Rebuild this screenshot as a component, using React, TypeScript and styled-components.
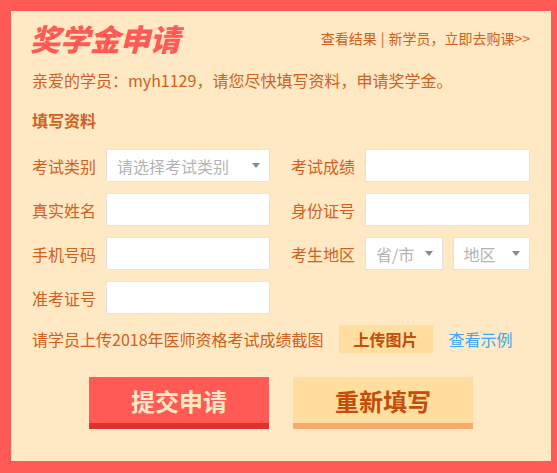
import React from "react";
import styled, { createGlobalStyle } from "styled-components";

const Global = createGlobalStyle`
  html, body { margin: 0; padding: 0; }
  body { font-family: "Noto Sans CJK SC", "Noto Sans", sans-serif; }
  * { box-sizing: border-box; }
`;

const Frame = styled.div`
  width: 557px;
  height: 473px;
  background: #ff5a55;
  padding: 11px 6px 12px 11px;
`;

const Panel = styled.div`
  height: 100%;
  background: #ffe9c4;
  padding: 10px 21px 0 21px;
  color: #d0601c;
`;

const Header = styled.div`
  display: flex;
  align-items: center;
  justify-content: space-between;
  height: 34px;
`;

const Title = styled.h1`
  margin: 0 0 0 -2px;
  font-size: 30px;
  line-height: 34px;
  font-weight: 900;
  font-style: italic;
  color: #ff5a55;
`;

const Links = styled.div`
  font-size: 14px;
  line-height: 20px;
  color: #d0601c;
  display: flex;
  align-items: center;
`;

const Sep = styled.span`
  margin: 0 4px;
`;

const Greeting = styled.p`
  margin: 14px 0 0;
  font-size: 16px;
  line-height: 22px;
`;

const SectionTitle = styled.h2`
  margin: 18px 0 0;
  font-size: 16px;
  line-height: 22px;
  font-weight: 700;
`;

const Form = styled.div`
  margin-top: 18px;
  display: grid;
  grid-template-columns: 238px 239px;
  column-gap: 21px;
  row-gap: 11px;
`;

const Field = styled.div`
  display: flex;
  align-items: center;
  height: 33px;
`;

const Label = styled.span`
  width: 74px;
  flex: none;
  font-size: 16px;
  line-height: 22px;
`;

const Inputs = styled.div`
  flex: 1;
  display: flex;
  gap: 10px;
  height: 100%;
`;

const Box = styled.div`
  flex: 1;
  height: 100%;
  background: #fff;
  border: 1px solid #e4e4e4;
  display: flex;
  align-items: center;
  justify-content: space-between;
  padding: 0 9px 0 10px;
`;

const Placeholder = styled.span`
  font-size: 16px;
  color: #b4b4b4;
  line-height: 22px;
`;

const Caret = styled.span`
  width: 0;
  height: 0;
  border-left: 4px solid transparent;
  border-right: 4px solid transparent;
  border-top: 5px solid #8a8a8a;
`;

const UploadRow = styled.div`
  margin-top: 11px;
  height: 28px;
  display: flex;
  align-items: center;
`;

const UploadText = styled.span`
  font-size: 16px;
  line-height: 22px;
  white-space: nowrap;
`;

const UploadButton = styled.span`
  margin-left: 15px;
  width: 94px;
  height: 28px;
  flex: none;
  background: #ffdea0;
  color: #c44d08;
  font-size: 16px;
  font-weight: 700;
  display: flex;
  align-items: center;
  justify-content: center;
`;

const ExampleLink = styled.span`
  margin-left: 16px;
  color: #3aaaf2;
  font-size: 16px;
  line-height: 22px;
  white-space: nowrap;
`;

const Actions = styled.div`
  margin-top: 24px;
  display: flex;
  justify-content: center;
  gap: 24px;
`;

const ActionButton = styled.div<{ $primary?: boolean }>`
  width: 180px;
  height: 52px;
  background: ${(p) => (p.$primary ? "#ff5a55" : "#ffdea0")};
  border-bottom: 6px solid ${(p) => (p.$primary ? "#e0322d" : "#ffa86c")};
  color: ${(p) => (p.$primary ? "#ffe9c4" : "#c44d08")};
  font-size: 24px;
  font-weight: 700;
  display: flex;
  align-items: center;
  justify-content: center;
`;

const SelectBox = ({ text }: { text: string }) => (
  <Box>
    <Placeholder>{text}</Placeholder>
    <Caret />
  </Box>
);

export default function App() {
  return (
    <>
      <Global />
      <Frame>
        <Panel>
          <Header>
            <Title>奖学金申请</Title>
            <Links>
              <span>查看结果</span>
              <Sep>|</Sep>
              <span>新学员，立即去购课&gt;&gt;</span>
            </Links>
          </Header>
          <Greeting>亲爱的学员：myh1129，请您尽快填写资料，申请奖学金。</Greeting>
          <SectionTitle>填写资料</SectionTitle>
          <Form>
            <Field>
              <Label>考试类别</Label>
              <Inputs>
                <SelectBox text="请选择考试类别" />
              </Inputs>
            </Field>
            <Field>
              <Label>考试成绩</Label>
              <Inputs>
                <Box />
              </Inputs>
            </Field>
            <Field>
              <Label>真实姓名</Label>
              <Inputs>
                <Box />
              </Inputs>
            </Field>
            <Field>
              <Label>身份证号</Label>
              <Inputs>
                <Box />
              </Inputs>
            </Field>
            <Field>
              <Label>手机号码</Label>
              <Inputs>
                <Box />
              </Inputs>
            </Field>
            <Field>
              <Label>考生地区</Label>
              <Inputs>
                <SelectBox text="省/市" />
                <SelectBox text="地区" />
              </Inputs>
            </Field>
            <Field>
              <Label>准考证号</Label>
              <Inputs>
                <Box />
              </Inputs>
            </Field>
          </Form>
          <UploadRow>
            <UploadText>请学员上传2018年医师资格考试成绩截图</UploadText>
            <UploadButton>上传图片</UploadButton>
            <ExampleLink>查看示例</ExampleLink>
          </UploadRow>
          <Actions>
            <ActionButton $primary>提交申请</ActionButton>
            <ActionButton>重新填写</ActionButton>
          </Actions>
        </Panel>
      </Frame>
    </>
  );
}
